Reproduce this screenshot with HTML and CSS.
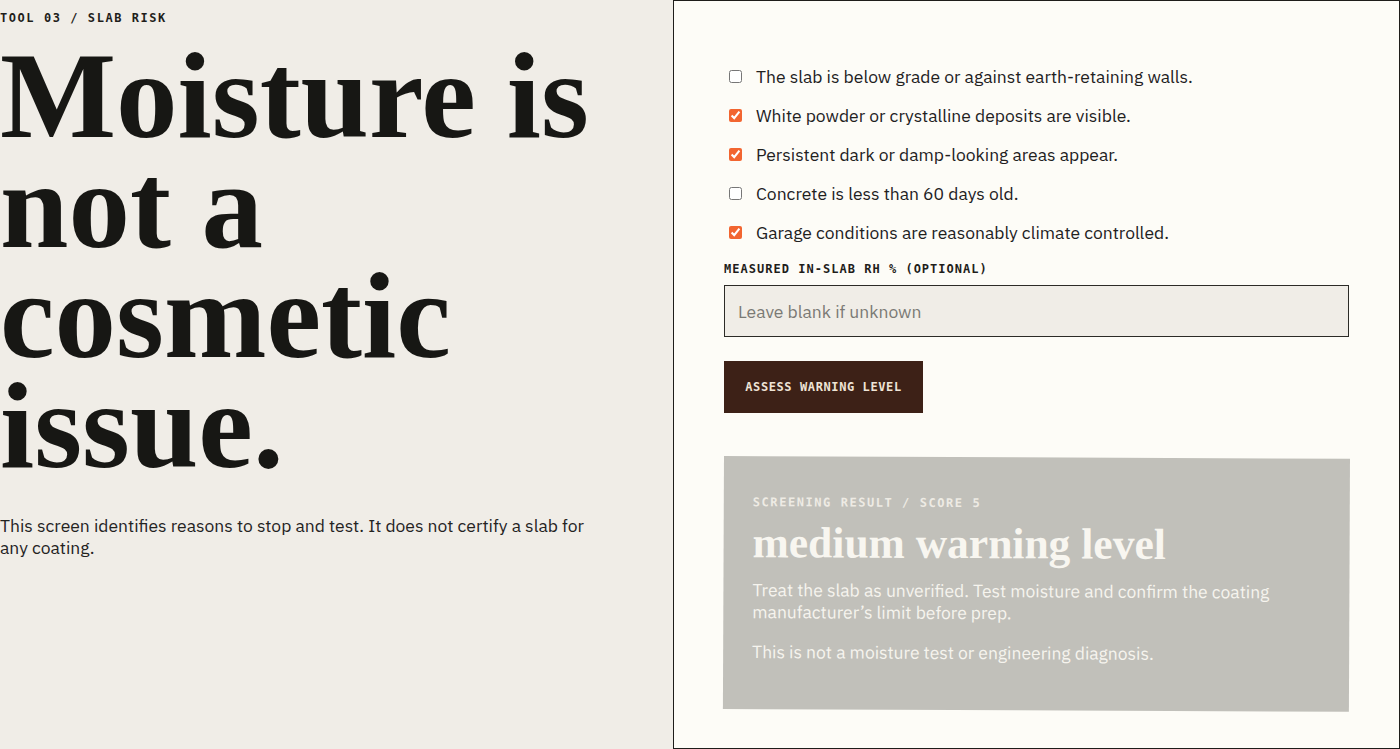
FILE: index.html
```html
<!DOCTYPE html>
<html lang="en">
<head>
<meta charset="utf-8">
<title>Slab Risk</title>
<link rel="stylesheet" href="styles.css">
</head>
<body>
<main class="layout">
  <section class="intro">
    <p class="eyebrow">TOOL 03 / SLAB RISK</p>
    <h1 class="headline">Moisture is not a cosmetic issue.</h1>
    <p class="lede">This screen identifies reasons to stop and test. It does not certify a slab for any coating.</p>
  </section>

  <section class="panel">
    <form class="checker">
      <ul class="checks">
        <li><label class="check"><input type="checkbox"><span>The slab is below grade or against earth-retaining walls.</span></label></li>
        <li><label class="check"><input type="checkbox" checked><span>White powder or crystalline deposits are visible.</span></label></li>
        <li><label class="check"><input type="checkbox" checked><span>Persistent dark or damp-looking areas appear.</span></label></li>
        <li><label class="check"><input type="checkbox"><span>Concrete is less than 60 days old.</span></label></li>
        <li><label class="check"><input type="checkbox" checked><span>Garage conditions are reasonably climate controlled.</span></label></li>
      </ul>
      <label class="field-label" for="rh">MEASURED IN-SLAB RH % (OPTIONAL)</label>
      <input class="field" id="rh" type="text" placeholder="Leave blank if unknown">
      <button class="assess" type="button">ASSESS WARNING LEVEL</button>
    </form>

    <div class="result">
      <p class="result-tag">SCREENING RESULT / SCORE 5</p>
      <h2 class="result-title">medium warning level</h2>
      <p class="result-text">Treat the slab as unverified. Test moisture and confirm the coating manufacturer’s limit before prep.</p>
      <p class="result-text note">This is not a moisture test or engineering diagnosis.</p>
    </div>
  </section>
</main>
</body>
</html>
```

FILE: styles.css
```css
* {
  box-sizing: border-box;
}

html, body {
  margin: 0;
  padding: 0;
  height: 100%;
}

body {
  background: #f0ede7;
  color: #1b1a17;
  font-family: "IBM Plex Sans", Roboto, "Liberation Sans", sans-serif;
}

.layout {
  display: grid;
  grid-template-columns: 673px 1fr;
  height: 749px;
}

/* left column */
.intro {
  padding-top: 11px;
}

.eyebrow {
  margin: 0;
  font-family: "DejaVu Sans Mono", "Liberation Mono", monospace;
  font-weight: 700;
  font-size: 12px;
  line-height: 15px;
  letter-spacing: 0.13em;
  color: #1f1e1b;
}

.headline {
  margin: 15px 0 0;
  width: 640px;
  font-family: "Liberation Serif", "Times New Roman", serif;
  font-weight: 700;
  font-size: 123px;
  line-height: 110px;
  color: #171714;
}

.lede {
  margin: 34px 0 0;
  width: 600px;
  font-size: 17.5px;
  line-height: 22px;
  color: #24231f;
}

/* right panel */
.panel {
  background: #fdfcf7;
  border: 1px solid #1e1d1a;
  padding: 63px 49px 0 50px;
}

.checker {
  display: flex;
  flex-direction: column;
  align-items: flex-start;
}

.checks {
  list-style: none;
  margin: 0;
  padding: 0;
  display: flex;
  flex-direction: column;
  gap: 15px;
}

.check {
  display: flex;
  align-items: center;
  height: 24px;
  font-size: 17.5px;
  color: #22211e;
}

.check input {
  width: 13px;
  height: 13px;
  margin: 0 14px 0 5px;
  accent-color: #f26530;
}

.field-label {
  margin-top: 18px;
  font-family: "DejaVu Sans Mono", "Liberation Mono", monospace;
  font-weight: 700;
  font-size: 12px;
  line-height: 14px;
  letter-spacing: 0.085em;
  color: #1f1e1b;
}

.field {
  margin-top: 9px;
  width: 625px;
  height: 52px;
  padding: 0 13px;
  border: 1px solid #2c2b27;
  border-radius: 0;
  background: #f0ede7;
  font-family: inherit;
  font-size: 17.5px;
  color: #22211e;
}

.field::placeholder {
  color: #7b7a75;
}

.assess {
  margin-top: 24px;
  width: 199px;
  height: 52px;
  border: 0;
  border-radius: 0;
  background: #3d2117;
  color: #efe4d6;
  font-family: "DejaVu Sans Mono", "Liberation Mono", monospace;
  font-weight: 700;
  font-size: 12px;
  letter-spacing: 0.05em;
}

.result {
  margin-top: 43px;
  width: 626px;
  height: 253px;
  padding: 39px 29px 0;
  background: #c1c0ba;
  color: #f6f4ee;
  transform: rotate(0.25deg);
  transform-origin: left top;
}

.result-tag {
  margin: 0;
  font-family: "DejaVu Sans Mono", "Liberation Mono", monospace;
  font-weight: 700;
  font-size: 12px;
  line-height: 14px;
  letter-spacing: 0.13em;
  color: #eeebe4;
}

.result-title {
  margin: 10px 0 0;
  font-family: "Liberation Serif", "Times New Roman", serif;
  font-weight: 700;
  font-size: 43.5px;
  line-height: 46px;
  color: #f8f6f0;
}

.result-text {
  margin: 14px 0 0;
  font-size: 17.5px;
  line-height: 22px;
  width: 540px;
}

.result-text.note {
  margin-top: 18px;
}
```
